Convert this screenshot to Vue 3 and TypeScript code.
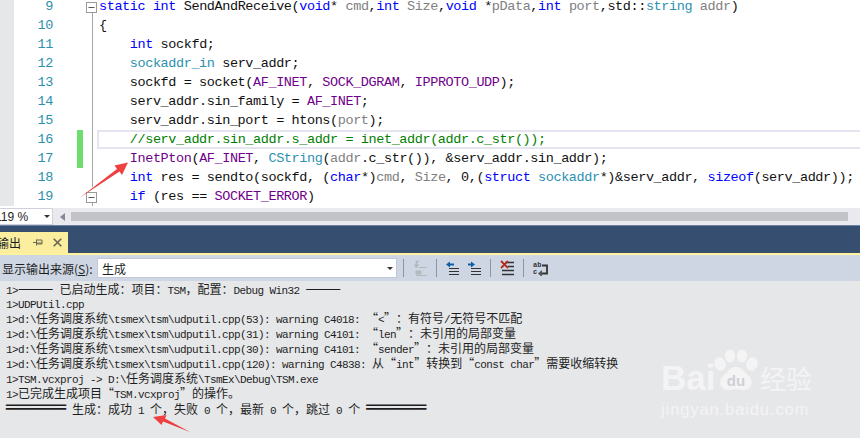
<script setup lang="ts">
interface Tok { t: string; c: string }
const parse = (s: string): Tok[] => {
  const out: Tok[] = []
  const re = /\{(\w):([^}]*)\}/g
  let last = 0
  let m: RegExpExecArray | null
  while ((m = re.exec(s))) {
    if (m.index > last) out.push({ t: s.slice(last, m.index), c: '' })
    out.push({ t: m[2], c: m[1] })
    last = m.index + m[0].length
  }
  if (last < s.length) out.push({ t: s.slice(last), c: '' })
  return out
}
const raw: string[] = [
  '{k:static} {k:int} SendAndReceive({k:void}* {p:cmd},{k:int} {p:Size},{k:void} *{p:pData},{k:int} {p:port},std::{y:string} {p:addr})',
  '{',
  '    {k:int} sockfd;',
  '    {y:sockaddr_in} serv_addr;',
  '    sockfd = socket({m:AF_INET}, {m:SOCK_DGRAM}, {m:IPPROTO_UDP});',
  '    serv_addr.sin_family = {m:AF_INET};',
  '    serv_addr.sin_port = htons({p:port});',
  '    {g://serv_addr.sin_addr.s_addr = inet_addr(addr.c_str());}',
  '    {m:InetPton}({m:AF_INET}, {y:CString}({p:addr}.c_str()), &serv_addr.sin_addr);',
  '    {k:int} res = sendto(sockfd, ({k:char}*){p:cmd}, {p:Size}, 0,({k:struct} {y:sockaddr}*)&serv_addr, {k:sizeof}(serv_addr));',
  '    {k:if} (res == {m:SOCKET_ERROR})',
]
const rows = raw.map((s, i) => ({
  n: i + 9,
  toks: parse(s),
  changed: i === 7 || i === 8,
  current: i === 7,
  fold: i === 0 || i === 10,
  rail: i > 0 && i < 10,
}))
const outText: string[] = [
  '1>——— 已启动生成：项目：TSM，配置：Debug Win32 ———',
  '1>UDPUtil.cpp',
  '1>d:\\任务调度系统\\tsmex\\tsm\\udputil.cpp(53): warning C4018: “<”：有符号/无符号不匹配',
  '1>d:\\任务调度系统\\tsmex\\tsm\\udputil.cpp(31): warning C4101: “len”：未引用的局部变量',
  '1>d:\\任务调度系统\\tsmex\\tsm\\udputil.cpp(30): warning C4101: “sender”：未引用的局部变量',
  '1>d:\\任务调度系统\\tsmex\\tsm\\udputil.cpp(120): warning C4838: 从“int”转换到“const char”需要收缩转换',
  '1>TSM.vcxproj -> D:\\任务调度系统\\TsmEx\\Debug\\TSM.exe',
  '1>已完成生成项目“TSM.vcxproj”的操作。',
  '═════ 生成：成功 1 个，失败 0 个，最新 0 个，跳过 0 个 ═════',
]
const splitter = /(“|”|═+|—+|[\u3000-\u9fff\uff00-\uffef]+)/
const classify = (t: string): string => {
  if (t === '“') return 'qo'
  if (t === '”') return 'qc'
  if (t[0] === '═') return 'dbl'
  if (t[0] === '—') return 'dash'
  return /[\u3000-\u9fff\uff00-\uffef]/.test(t) ? 'z' : ''
}
const outLines = outText.map((l) =>
  l.split(splitter).filter(Boolean).map((t) => ({ t, c: classify(t) })),
)
</script>

<template>
  <div class="screen">
    <section class="editor">
      <div v-for="r in rows" :key="r.n" class="row">
        <span class="strip"></span>
        <span class="num">{{ r.n }}</span>
        <span class="mark" :class="{ on: r.changed }"></span>
        <span class="foldcol" :class="{ rail: r.rail, railbelow: r.fold }">
          <svg v-if="r.fold" class="foldbox" width="11" height="11" viewBox="0 0 11 11">
            <rect x=".5" y=".5" width="10" height="10" fill="#fff" stroke="#9a9a9a" />
            <path d="M2.500 5.500h6" stroke="#555" />
          </svg>
        </span>
        <code class="code" :class="{ cur: r.current }"><span v-for="(k, i) in r.toks" :key="i" :class="k.c">{{ k.t }}</span></code>
      </div>
    </section>

    <div class="hbar">
      <div class="zoom">
        <span class="zoomtxt">119 %</span>
        <i class="caret"></i>
      </div>
      <i class="leftarrow"></i>
      <div class="thumb"></div>
    </div>

    <div class="band">
      <div class="tab">
        <span class="tabtxt">输出</span>
        <svg class="pin" width="10" height="9" viewBox="0 0 10 9">
          <path d="M0 4.500h3M3.500 1.500v6M3.500 2h5.500v4H3.500M3.500 5h5.500" fill="none" stroke="#6b6650" />
        </svg>
        <svg class="close" width="9" height="9" viewBox="0 0 9 9">
          <path d="M.7.7l7.600 7.600M8.300.7L.7 8.300" stroke="#6b6650" stroke-width="1.600" />
        </svg>
      </div>
    </div>

    <div class="toolbar">
      <span class="label">显示输出来源(<u>S</u>):</span>
      <div class="combo"><span>生成</span><i class="caret dark"></i></div>
      <i class="sep first"></i>
      <svg class="ico" width="14" height="16" viewBox="0 0 14 16">
        <path d="M6 1.500H3.500v5M1.500 4.500l2 2.500 2-2.500" fill="none" stroke="#b4b8bf" stroke-width="1.600" />
        <path d="M6 7.500h8M3 11h5v3H3zM3 15.500h11" fill="#b4b8bf" stroke="#b4b8bf" />
      </svg>
      <i class="sep"></i>
      <svg class="ico" width="13" height="14" viewBox="0 0 13 14">
        <path d="M0 3.500L4 .5v2h4v2H4v2z" fill="#0e5ea8" />
        <path d="M3 7.500h10M3 10.500h10M3 13.500h10" stroke="#333" />
      </svg>
      <svg class="ico gap" width="13" height="14" viewBox="0 0 13 14">
        <path d="M7 3.500L3 .5v2H0v2h3v2z" fill="#0e5ea8" />
        <path d="M3 7.500h10M3 10.500h10M3 13.500h10" stroke="#333" />
      </svg>
      <i class="sep two"></i>
      <svg class="ico" width="14" height="16" viewBox="0 0 14 16">
        <path d="M5 2.500h9M8 6.500h6M2 10.500h12M2 14.500h12" stroke="#333" stroke-width="1.600" />
        <path d="M1 1l7 7M8 1L1 8" stroke="#b03020" stroke-width="1.800" />
      </svg>
      <i class="sep"></i>
      <svg class="ico" width="15" height="15" viewBox="0 0 15 15">
        <text x="0" y="6" class="icotxt">ab</text>
        <text x="0" y="13" class="icotxt">c</text>
        <path d="M9 4.500h5v8H9" fill="none" stroke="#333" stroke-width="1.800" />
        <path d="M5 12.500l4-3.500v7z" fill="#555" />
      </svg>
    </div>

    <section class="output">
      <div v-for="(l, i) in outLines" :key="i" class="oline"><span v-for="(s, j) in l" :key="j" :class="s.c">{{ s.t }}</span></div>
    </section>

    <svg class="anno" width="860" height="438" viewBox="0 0 860 438">
      <path d="M80 197.500L117 169l-2.500-3.500 13.500-3-6 12.500-2.500-3.500z" fill="#ee4040" />
      <path d="M190 432L163 421.500l-1.500 3.500L153 417l13.500-2-1.500 3.500z" fill="#ee4040" />
    </svg>

    <div class="wm">
      <div class="wmtop">
        <span class="bai">Bai</span>
        <svg class="paw" width="46" height="46" viewBox="0 0 46 46">
          <ellipse cx="7" cy="14" rx="5.500" ry="7" transform="rotate(-20 7 14)" />
          <ellipse cx="17" cy="6" rx="5" ry="6.500" />
          <ellipse cx="29" cy="6" rx="5" ry="6.500" />
          <ellipse cx="39" cy="14" rx="5.500" ry="7" transform="rotate(20 39 14)" />
          <path d="M23 17c6 0 8 5 13 9 5 5 3 14-5 14-3 0-5-1-8-1s-5 1-8 1c-8 0-10-9-5-14 5-4 7-9 13-9z" />
          <text x="23" y="36" class="du">du</text>
        </svg>
        <span class="jy">经验</span>
      </div>
      <div class="wmurl">jingyan.baidu.com</div>
    </div>
  </div>
</template>

<style scoped>
.screen {
  position: relative;
  width: 860px;
  height: 438px;
  overflow: hidden;
  display: flex;
  flex-direction: column;
  background: #fff;
  font-family: "Noto Sans CJK SC", "Liberation Sans", sans-serif;
}
.editor {
  height: 208px;
  overflow: hidden;
  flex: none;
}
.row {
  display: flex;
  height: 19px;
  position: relative;
  top: -3px;
}
.strip {
  width: 14px;
  background: #e6e7e8;
  flex: none;
}
.num {
  width: 39px;
  text-align: right;
  color: #2b91af;
  font: 13.500px/19px "Liberation Mono", monospace;
  letter-spacing: -.4px;
  flex: none;
}
.mark {
  width: 6px;
  margin-left: 24px;
  flex: none;
}
.mark.on {
  background: #6fdc6f;
}
.foldcol {
  width: 13px;
  margin-left: 3px;
  position: relative;
  flex: none;
}
.foldcol.rail::before,
.foldcol.railbelow::before {
  content: "";
  position: absolute;
  left: 6px;
  top: 0;
  bottom: 0;
  width: 1px;
  background: #a8a8a8;
}
.foldcol.railbelow::before {
  top: 15px;
}
.foldbox {
  position: absolute;
  left: 0;
  top: 5px;
}
.code {
  flex: 1;
  white-space: pre;
  font: 13.500px/19px "Liberation Mono", monospace;
  letter-spacing: -.4px;
  color: #111;
  margin-left: -2px;
  padding-left: 2px;
  box-sizing: border-box;
}
.code.cur {
  box-shadow: inset 0 2px 0 #e4e5f0, inset 0 -2px 0 #e4e5f0, inset 2px 0 0 #e4e5f0;
}
.k { color: #0000ff; }
.y { color: #2b91af; }
.m { color: #6f008a; }
.p { color: #808080; }
.g { color: #008000; }

.hbar {
  height: 17px;
  flex: none;
  display: flex;
  align-items: center;
  background: #e9e9ee;
}
.zoom {
  width: 53px;
  height: 17px;
  box-sizing: border-box;
  background: #fff;
  border: 1px solid #cfd2da;
  border-left: 0;
  display: flex;
  align-items: center;
  overflow: hidden;
  flex: none;
}
.zoomtxt {
  margin-left: -5px;
  width: 49px;
  font: 12px "Liberation Sans", sans-serif;
  color: #1e1e1e;
  flex: none;
}
.caret {
  width: 0;
  height: 0;
  border: 3.500px solid transparent;
  border-top: 3.500px solid #333;
  border-bottom: 0;
  flex: none;
}
.leftarrow {
  width: 0;
  height: 0;
  border: 4.500px solid transparent;
  border-right: 5px solid #868999;
  border-left: 0;
  margin-left: 7px;
  flex: none;
}
.thumb {
  width: 777px;
  height: 9px;
  margin-left: 6px;
  background: #c2c3c9;
  flex: none;
}
.band {
  height: 30px;
  flex: none;
  box-sizing: border-box;
  background: #364e6f;
  border-top: 1px solid #6c7fa5;
  border-bottom: 2px solid #fff29d;
  padding-top: 6px;
}
.tab {
  width: 68px;
  height: 21px;
  background: #fbee9f;
  display: flex;
  align-items: center;
  overflow: hidden;
}
.tabtxt {
  font-size: 12px;
  line-height: 21px;
  margin-left: -3px;
  width: 36px;
  color: #1e1e1e;
  flex: none;
}
.pin { flex: none; }
.close { margin-left: 10px; flex: none; }

.toolbar {
  height: 26px;
  flex: none;
  background: #ced6e4;
  display: flex;
  align-items: center;
}
.label {
  font-size: 12px;
  margin-left: 2px;
  width: 95px;
  color: #1e1e1e;
  flex: none;
  white-space: nowrap;
}
.combo {
  width: 300px;
  height: 20px;
  box-sizing: border-box;
  background: #fff;
  border: 1px solid #c0c8da;
  display: flex;
  align-items: center;
  justify-content: space-between;
  padding: 0 3px 0 4px;
  font-size: 12px;
  color: #1e1e1e;
  flex: none;
}
.sep {
  width: 1px;
  height: 18px;
  background: #8d93a3;
  margin: 0 9px;
  flex: none;
}
.sep.first { margin-left: 6px; }
.ico { flex: none; }
.ico.gap { margin-left: 9px; }
.icotxt {
  font: bold 7px "Liberation Mono", monospace;
  fill: #333;
}

.output {
  flex: 1;
  background: #e6e7e9;
  padding-top: 1px;
}
.oline {
  height: 15px;
  padding-left: 6px;
  white-space: pre;
  font: 11px/12px "Liberation Mono", monospace;
  letter-spacing: -.6px;
  color: #1e1e1e;
}
.oline::before {
  content: "\200b";
  font: 12px/12px "Noto Sans CJK SC", sans-serif;
}
.oline .z,
.oline .qo,
.oline .qc {
  font: 12px/12px "Noto Sans CJK SC", sans-serif;
  letter-spacing: 0;
}
.oline .qo,
.oline .qc {
  display: inline-block;
  width: 12px;
}
.oline .qo { text-align: right; }
.oline .qc { text-align: left; }
.oline .dbl {
  font: 19.930px/12px "DejaVu Sans Mono", monospace;
  letter-spacing: 0;
}
.oline .dash {
  font: 14.400px/12px "Noto Sans CJK SC", sans-serif;
  letter-spacing: 0;
}

.anno {
  position: absolute;
  inset: 0;
  pointer-events: none;
}
.wm {
  position: absolute;
  left: 661px;
  top: 349px;
  width: 155px;
  color: #f4f4f5;
  pointer-events: none;
}
.wmtop {
  display: flex;
  align-items: flex-end;
  height: 47px;
}
.bai {
  font: bold 35px/36px "Liberation Sans", sans-serif;
  width: 52px;
  flex: none;
}
.paw { fill: #f4f4f5; flex: none; }
.du {
  font: bold 15px "Liberation Sans", sans-serif;
  fill: #cfd0d3;
  text-anchor: middle;
}
.jy {
  font-size: 26px;
  line-height: 36px;
  flex: none;
  margin-left: 1px;
  white-space: nowrap;
}
.wmurl {
  font: 16.500px/20px "Liberation Sans", sans-serif;
  letter-spacing: .9px;
  margin-top: 3px;
}
</style>
